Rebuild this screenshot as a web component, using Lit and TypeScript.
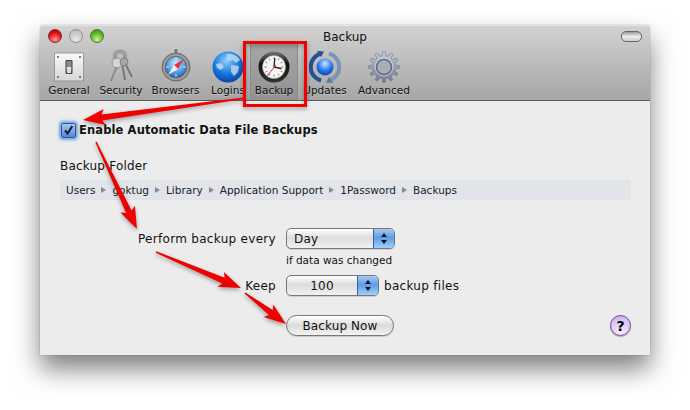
import { LitElement, html, css, svg } from "lit";
import { customElement } from "lit/decorators.js";

function arrow(x1: number, y1: number, x2: number, y2: number, head = 22, hw = 8, tail = 0.8, neck = 3) {
  const dx = x2 - x1, dy = y2 - y1, L = Math.hypot(dx, dy);
  const ux = dx / L, uy = dy / L, nx = -uy, ny = ux;
  const bx = x2 - ux * head, by = y2 - uy * head;
  const notch = 3;
  const nbx = bx + ux * notch, nby = by + uy * notch;
  const p = [
    [x1 + nx * tail, y1 + ny * tail],
    [nbx + nx * neck, nby + ny * neck],
    [bx + nx * hw, by + ny * hw],
    [x2, y2],
    [bx - nx * hw, by - ny * hw],
    [nbx - nx * neck, nby - ny * neck],
    [x1 - nx * tail, y1 - ny * tail],
  ];
  return p.map((q) => q.map((v) => v.toFixed(1)).join(",")).join(" ");
}

function gear(cx: number, cy: number, ro: number, ri: number, teeth: number) {
  const pts: string[] = [];
  const step = (Math.PI * 2) / teeth;
  for (let i = 0; i < teeth; i++) {
    const a = i * step;
    [[-0.3, ri], [-0.16, ro], [0.16, ro], [0.3, ri]].forEach(([f, r]) => {
      const t = a + f * step;
      pts.push(`${(cx + Math.cos(t) * r).toFixed(2)},${(cy + Math.sin(t) * r).toFixed(2)}`);
    });
  }
  return pts.join(" ");
}

const ARROWS: number[][] = [
  [246, 98, 83, 120],
  [96, 142, 137, 229],
  [156, 252, 241, 288],
  [245, 293, 286, 324],
];

const crumbs = ["Users", "goktug", "Library", "Application Support", "1Password", "Backups"];

const icons = {
  general: svg`<svg width="32" height="32" viewBox="0 0 32 32">
    <defs><linearGradient id="g1" x1="0" y1="0" x2="0" y2="1"><stop offset="0" stop-color="#fafafa"/><stop offset="1" stop-color="#d6d6d6"/></linearGradient></defs>
    <rect x="1.5" y="2" width="29" height="28" fill="url(#g1)" stroke="#8b8b8b" stroke-width=".8"/>
    <g fill="#666"><circle cx="5" cy="6" r="1.1"/><circle cx="27" cy="6" r="1.1"/><circle cx="5" cy="26" r="1.1"/><circle cx="27" cy="26" r="1.1"/></g>
    <rect x="12.5" y="9" width="7" height="14" rx="1" fill="#444"/>
    <path d="M13.5 16 L18.5 16 L18 22 L14 22Z" fill="#ddd"/>
    <path d="M13.5 10 H18.5 V16 H13.5Z" fill="#8a8a8a"/>
  </svg>`,
  security: svg`<svg width="32" height="36" viewBox="0 0 32 36" fill="none">
    <path d="M9 13 V8 C9 2 21 2 21 8 V13" stroke="#9a9a9a" stroke-width="2"/>
    <path d="M11 12 V8 C11 5 19 5 19 8 V12" stroke="#666" stroke-width=".8"/>
    <circle cx="12" cy="16" r="5" fill="#d4d4d4" stroke="#888" stroke-width=".8"/>
    <circle cx="19" cy="15" r="4" fill="#a6a6a6" stroke="#777" stroke-width=".8"/>
    <path d="M11.5 20 L6 34" stroke="#8a8a8a" stroke-width="2"/>
    <path d="M17.5 19 L20 33" stroke="#777" stroke-width="2"/>
    <path d="M21 18 L27 30" stroke="#777" stroke-width="2"/>
  </svg>`,
  browsers: svg`<svg width="32" height="34" viewBox="0 0 32 34">
    <defs><radialGradient id="s1" cx=".5" cy=".35" r=".7"><stop offset="0" stop-color="#d8f0ff"/><stop offset=".6" stop-color="#4d9be6"/><stop offset="1" stop-color="#1a55ad"/></radialGradient></defs>
    <rect x="14.5" y="0" width="3" height="4" rx="1" fill="#777"/>
    <circle cx="16" cy="18" r="14" fill="#999" stroke="#555" stroke-width=".8"/>
    <circle cx="16" cy="18" r="10.6" fill="url(#s1)" stroke="#444" stroke-width=".6"/>
    <path d="M24 10 L18 20 L14 16Z" fill="#e33"/>
    <path d="M8 26 L14 16 L18 20Z" fill="#eee"/>
    <path d="M16 8 V11 M16 25 V28 M6 18 H9 M23 18 H26" stroke="#fff" stroke-width=".8"/>
  </svg>`,
  logins: svg`<svg width="32" height="32" viewBox="0 0 32 32">
    <defs><radialGradient id="w1" cx=".45" cy=".3" r=".75"><stop offset="0" stop-color="#8fd0ff"/><stop offset=".55" stop-color="#1878dd"/><stop offset="1" stop-color="#073f9c"/></radialGradient></defs>
    <circle cx="16" cy="16" r="15.5" fill="url(#w1)"/>
    <path d="M15 3 C20 2 26 5 28 9 L24 12 L21 9 L17 10 L14 7Z M19 14 L27 15 L26 21 L22 25 L19 21Z M4 13 L9 12 L12 16 L9 19 L5 17Z" fill="#bcd8ee" opacity=".85"/>
  </svg>`,
  backup: svg`<svg width="32" height="32" viewBox="0 0 32 32">
    <defs><linearGradient id="c1" x1="0" y1="0" x2="0" y2="1"><stop offset="0" stop-color="#777"/><stop offset=".4" stop-color="#111"/><stop offset="1" stop-color="#333"/></linearGradient></defs>
    <circle cx="16" cy="16" r="15.5" fill="url(#c1)"/>
    <circle cx="16" cy="16" r="11.5" fill="#f6f6f4" stroke="#999" stroke-width=".5"/>
    <path d="M16 6.5 V8.5 M16 23.5 V25.5 M6.5 16 H8.5 M23.5 16 H25.5 M11 7.5 L12 9.3 M21 7.5 L20 9.3 M7.5 11 L9.3 12 M24.5 11 L22.7 12 M7.5 21 L9.3 20 M24.5 21 L22.7 20 M11 24.5 L12 22.7 M21 24.5 L20 22.7" stroke="#555" stroke-width=".8"/>
    <path d="M16 16 L16.8 7.5 M16 16 L23 17.5" stroke="#222" stroke-width="1.3" stroke-linecap="round"/>
    <path d="M18 14 L9 25" stroke="#c22" stroke-width=".9"/>
  </svg>`,
  updates: svg`<svg width="32" height="32" viewBox="0 0 32 32" fill="none">
    <defs><radialGradient id="u1" cx=".5" cy=".3" r=".8"><stop offset="0" stop-color="#cfe6ff"/><stop offset=".5" stop-color="#2a7af0"/><stop offset="1" stop-color="#0b2f9a"/></radialGradient></defs>
    <path d="M12 2.5 A14 14 0 0 0 12 29.5" stroke="#274f94" stroke-width="4"/>
    <path d="M20 29.5 A14 14 0 0 0 20 2.5" stroke="#7d94b6" stroke-width="4"/>
    <path d="M8 0 L15 0.5 L12 6Z" fill="#274f94"/>
    <path d="M24 32 L17 31.5 L20 26Z" fill="#5d78a3"/>
    <circle cx="16" cy="16" r="8.5" fill="url(#u1)"/>
  </svg>`,
  advanced: svg`<svg width="32" height="32" viewBox="0 0 32 32">
    <defs><linearGradient id="a1" x1="0" y1="0" x2="0" y2="1"><stop offset="0" stop-color="#c4ccd9"/><stop offset="1" stop-color="#6d7a92"/></linearGradient></defs>
    <polygon points=${gear(16, 16, 15.5, 11.5, 12)} fill="url(#a1)" stroke="#5f6c84" stroke-width=".5"/>
    <circle cx="16" cy="16" r="7.5" fill="#a9aeb6" stroke="#5f6c84" stroke-width="1.6"/>
    <circle cx="16" cy="16" r="9" fill="none" stroke="#dfe3ea" stroke-width=".7"/>
  </svg>`,
};

const tools: [keyof typeof icons, string, number][] = [
  ["general", "General", 48],
  ["security", "Security", 56],
  ["browsers", "Browsers", 53],
  ["logins", "Logins", 52],
  ["backup", "Backup", 48],
  ["updates", "Updates", 54],
  ["advanced", "Advanced", 64],
];

@customElement("app-root")
export class AppRoot extends LitElement {
  static styles = css`
    :host {
      display: block;
      position: relative;
      width: 690px;
      height: 410px;
      overflow: hidden;
      background: #fff;
      font-family: "DejaVu Sans", sans-serif;
      font-size: 11px;
      color: #111;
    }
    .stage { padding: 25px 40px; }
    .window {
      height: 330px;
      display: flex;
      flex-direction: column;
      border-radius: 4px 4px 0 0;
      background: #ececec;
      box-shadow: 0 14px 26px rgba(0,0,0,.5), 0 0 1px rgba(0,0,0,.6);
    }
    .head {
      height: 76px;
      background: linear-gradient(#d2d2d2, #a6a6a6);
      border-bottom: 1px solid #5c5c5c;
      border-top: 1px solid #e4e4e4;
      border-radius: 4px 4px 0 0;
      box-sizing: border-box;
      position: relative;
      display: flex;
      flex-direction: column;
    }
    .titlebar {
      height: 17px;
      flex: none;
      display: flex;
      align-items: center;
      justify-content: center;
      padding-top: 2px;
      position: relative;
      font-size: 12px;
    }
    .lights { position: absolute; left: 8px; top: 3px; display: flex; gap: 7px; }
    .light { width: 14px; height: 14px; border-radius: 50%; border: 1px solid #777; box-sizing: border-box; }
    .red { background: radial-gradient(circle at 50% 80%, #ff9a9a, #e01010 60%, #a00000); border-color:#8a2a2a; }
    .grey { background: radial-gradient(circle at 50% 80%, #e8e8e8, #b4b4b4); border-color:#939393; }
    .green { background: radial-gradient(circle at 50% 80%, #c8f59a, #5ab51e 60%, #3c8a10); border-color:#4b7a30; }
    .pill {
      position: absolute; right: 8px; top: 5px; width: 19px; height: 9px;
      border: 1px solid #666; border-radius: 5px;
      background: linear-gradient(#9c9c9c, #ececec 50%, #cfcfcf);
    }
    .tools { flex: 1; display: flex; padding-left: 5px; }
    .tool {
      flex: none;
      display: flex; flex-direction: column; align-items: center; justify-content: flex-end;
      padding-bottom: 4px; box-sizing: border-box; white-space: nowrap;
      text-shadow: 0 1px 0 rgba(255,255,255,.3);
      font-size: 10.5px;
    }
    .tool svg { display: block; margin-bottom: 1px; }
    .tool.on {
      background: linear-gradient(#a6a6a6, #929292);
      border-left: 1px solid #8a8a8a; border-right: 1px solid #8a8a8a;
      margin-top: -1px; margin-left: -4px; box-sizing: border-box;
    }
    .body { flex: 1; padding: 20px 19px 0 20px; display: flex; flex-direction: column; position: relative; }
    .enable { display: flex; align-items: center; gap: 3px; font-weight: 700; font-size: 11.5px; height: 16px; margin-top: 1px; letter-spacing: .12px; }
    .check {
      width: 13px; height: 13px; margin-left: 1px; flex: none; border-radius: 2px; border: 1px solid #33558f;
      background: linear-gradient(#a9c8ee, #4f8ad8);
      box-shadow: 0 0 3px 2px #6ea6e6;
      display: flex; align-items: center; justify-content: center;
    }
    .folder { margin-top: 20px; font-size: 12px; letter-spacing: .2px; line-height: 16px; }
    .crumbs {
      margin-top: 6px; height: 20px; background: #e1e5ea;
      display: flex; align-items: center; padding-left: 6px; gap: 6px; font-size: 10.5px; color: #222;
    }
    .sep { width: 0; height: 0; border-left: 5px solid #888; border-top: 3px solid transparent; border-bottom: 3px solid transparent; }
    .form { margin-top: 28px; display: grid; grid-template-columns: 216px auto; column-gap: 10px; align-items: center; justify-content: start; font-size: 12px; letter-spacing: .3px; }
    .label { text-align: right; }
    .rowc { display: flex; align-items: center; gap: 5px; }
    .control {
      height: 21px; box-sizing: border-box; border: 1px solid #777; border-radius: 5px; display: flex;
      background: linear-gradient(#fff, #ddd 45%, #f0f0f0);
      overflow: hidden; box-shadow: 0 1px 0 rgba(0,0,0,.12);
    }
    .day { width: 109px; }
    .keep { width: 93px; }
    .val { flex: 1; display: flex; align-items: center; padding-left: 7px; font-size: 12px; letter-spacing: .2px; }
    .keep .val { justify-content: center; padding: 0; }
    .stepper {
      width: 20px; flex: none; border-left: 1px solid #3c5d9c;
      background: linear-gradient(#a9c9f2, #5e9ce8 45%, #9fd0fb);
      display: flex; flex-direction: column; align-items: center; justify-content: center; gap: 3px;
    }
    .up { width: 0; height: 0; border-bottom: 4px solid #111; border-left: 3px solid transparent; border-right: 3px solid transparent; }
    .down { width: 0; height: 0; border-top: 4px solid #111; border-left: 3px solid transparent; border-right: 3px solid transparent; }
    .hint { grid-column: 2; font-size: 10.5px; letter-spacing: 0; line-height: 12px; margin: 5px 0 9px; }
    .btn {
      grid-column: 2; width: 108px; height: 21px; box-sizing: border-box; margin-top: 19px;
      border: 1px solid #777; border-radius: 11px;
      background: linear-gradient(#fff, #dcdcdc 50%, #f4f4f4);
      box-shadow: 0 1px 0 rgba(0,0,0,.15);
      display: flex; align-items: center; justify-content: center; font-size: 12px; letter-spacing: .1px;
    }
    .help {
      position: absolute; right: 19px; bottom: 19px; width: 21px; height: 21px; box-sizing: border-box;
      border-radius: 50%; border: 1px solid #6d4a9c;
      background: radial-gradient(circle at 50% 85%, #f6ecff, #d9bff2 70%, #bb98de);
      box-shadow: 0 1px 1px rgba(0,0,0,.3);
      display: flex; align-items: center; justify-content: center; font-weight: 700; font-size: 14px; color: #000;
    }
    .overlay { position: absolute; left: 0; top: 0; pointer-events: none; filter: drop-shadow(0 2px 2px rgba(0,0,0,.35)); }
  `;

  render() {
    return html`
      <div class="stage">
        <div class="window">
          <div class="head">
            <div class="titlebar">
              <div class="lights">
                <span class="light red"></span><span class="light grey"></span><span class="light green"></span>
              </div>
              Backup
              <span class="pill"></span>
            </div>
            <div class="tools">
              ${tools.map(([k, t, w]) => html`
                <div class="tool ${k === "backup" ? "on" : ""}" style="width:${w}px">${icons[k]}<span>${t}</span></div>
              `)}
            </div>
          </div>
          <div class="body">
            <div class="enable">
              <span class="check">
                <svg width="11" height="11" viewBox="0 0 11 11" fill="none"><path d="M2 5.5 L4.6 8.6 L9.3 1" stroke="#0c1c3a" stroke-width="2"/></svg>
              </span>
              Enable Automatic Data File Backups
            </div>
            <div class="folder">Backup Folder</div>
            <div class="crumbs">
              ${crumbs.map((c, i) => html`${i ? html`<span class="sep"></span>` : ""}<span>${c}</span>`)}
            </div>
            <div class="form">
              <div class="label">Perform backup every</div>
              <div class="control day">
                <span class="val">Day</span>
                <span class="stepper"><span class="up"></span><span class="down"></span></span>
              </div>
              <div class="hint">if data was changed</div>
              <div class="label">Keep</div>
              <div class="rowc">
                <div class="control keep">
                  <span class="val">100</span>
                  <span class="stepper"><span class="up"></span><span class="down"></span></span>
                </div>
                <span>backup files</span>
              </div>
              <div class="btn">Backup Now</div>
            </div>
            <div class="help">?</div>
          </div>
        </div>
      </div>
      <svg class="overlay" width="690" height="410" viewBox="0 0 690 410">
        <rect x="244.5" y="42.5" width="61" height="63" fill="none" stroke="#f00000" stroke-width="3"/>
        ${ARROWS.map((a) => svg`<polygon points=${arrow(a[0], a[1], a[2], a[3])} fill="#f00000"/>`)}
      </svg>
    `;
  }
}
